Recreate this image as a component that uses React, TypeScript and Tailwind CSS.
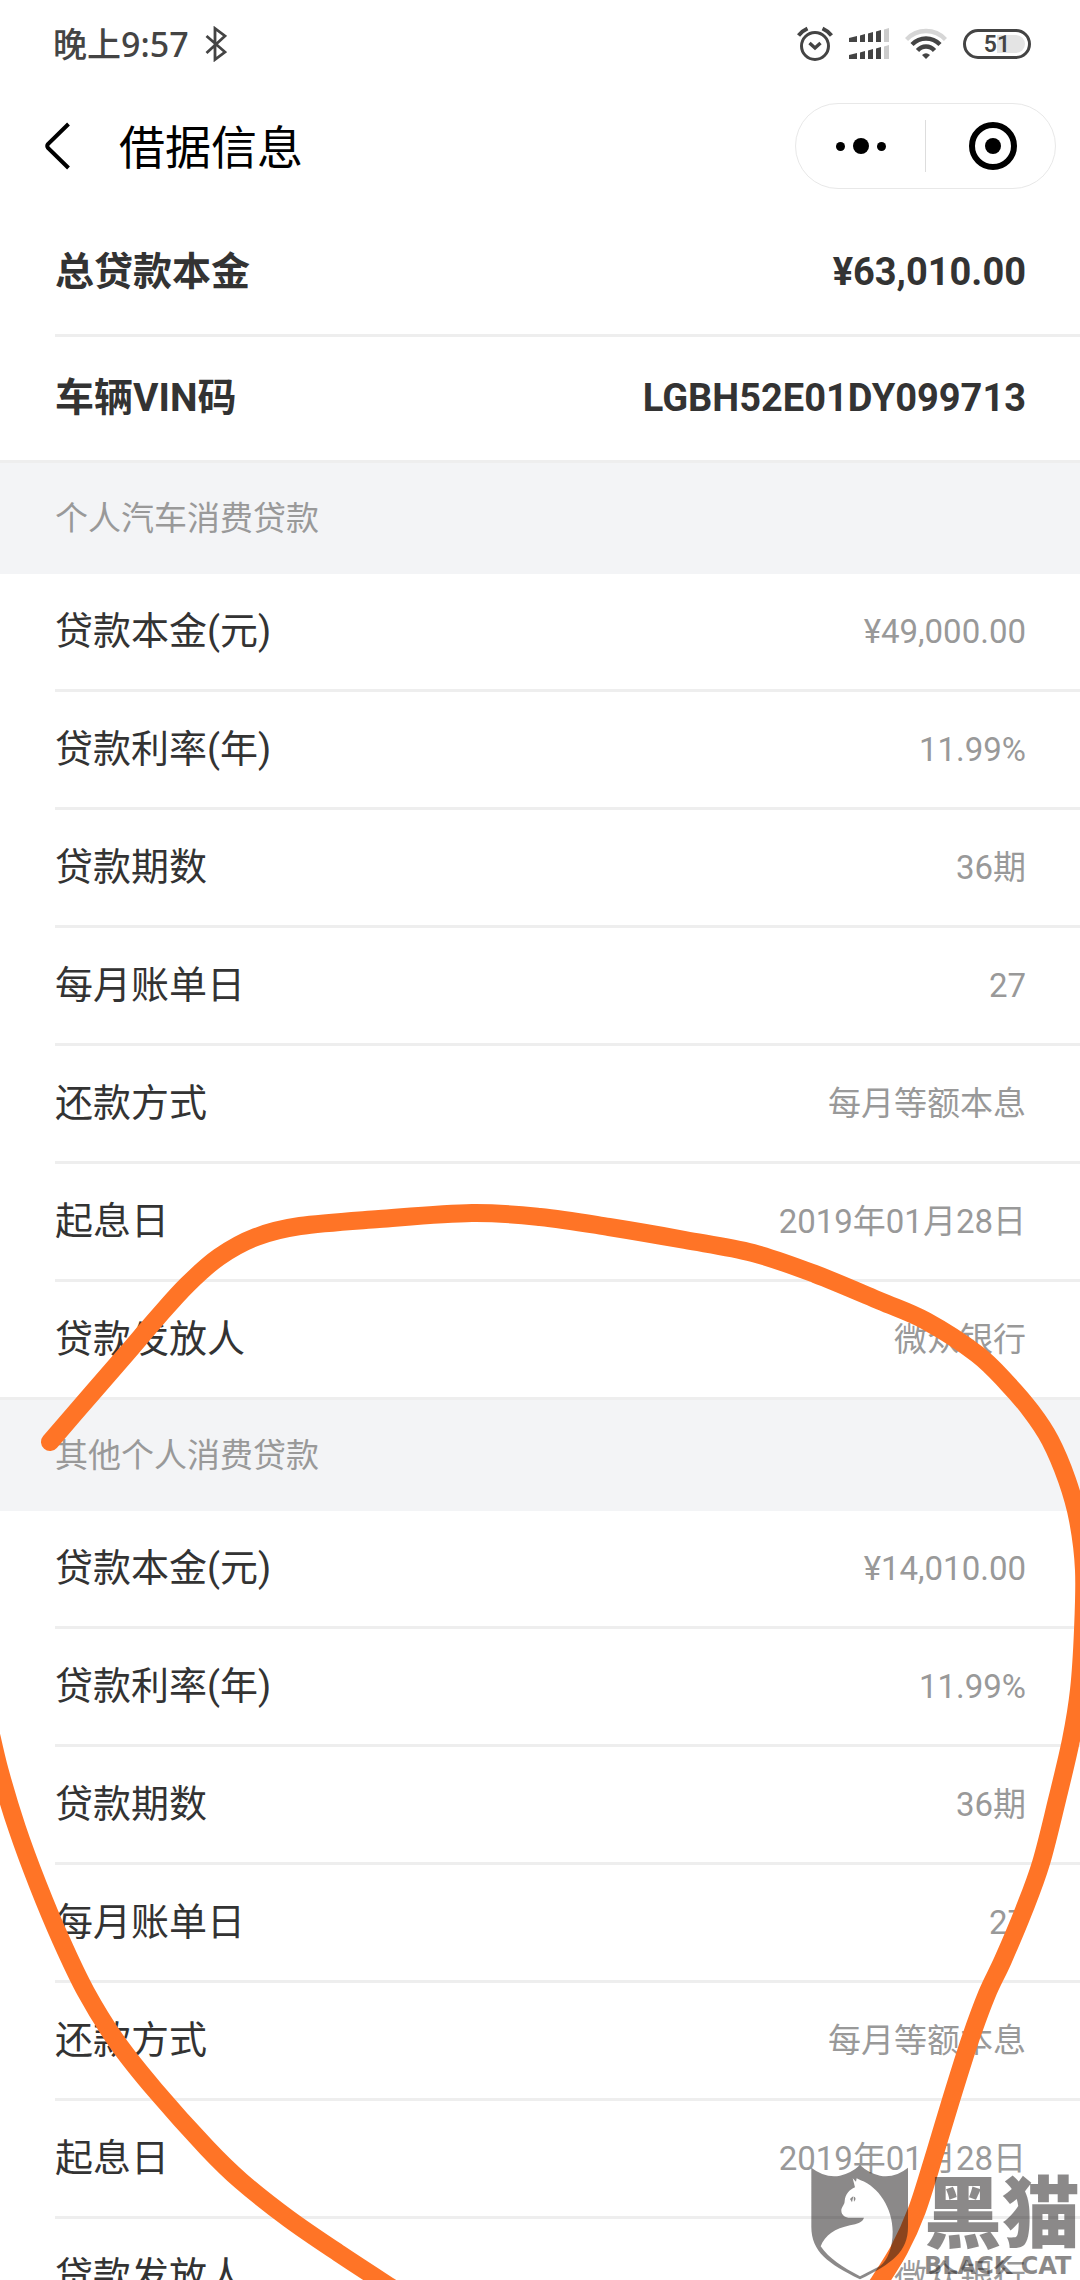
import React from "react";

interface LoanRow {
  label: string;
  value: string;
}

interface LoanSection {
  title: string;
  rows: LoanRow[];
}

type Point = [number, number];

const SUMMARY: LoanRow[] = [
  { label: "总贷款本金", value: "¥63,010.00" },
  { label: "车辆VIN码", value: "LGBH52E01DY099713" },
];

const SECTIONS: LoanSection[] = [
  {
    title: "个人汽车消费贷款",
    rows: [
      { label: "贷款本金(元)", value: "¥49,000.00" },
      { label: "贷款利率(年)", value: "11.99%" },
      { label: "贷款期数", value: "36期" },
      { label: "每月账单日", value: "27" },
      { label: "还款方式", value: "每月等额本息" },
      { label: "起息日", value: "2019年01月28日" },
      { label: "贷款发放人", value: "微众银行" },
    ],
  },
  {
    title: "其他个人消费贷款",
    rows: [
      { label: "贷款本金(元)", value: "¥14,010.00" },
      { label: "贷款利率(年)", value: "11.99%" },
      { label: "贷款期数", value: "36期" },
      { label: "每月账单日", value: "27" },
      { label: "还款方式", value: "每月等额本息" },
      { label: "起息日", value: "2019年01月28日" },
      { label: "贷款发放人", value: "微众银行" },
    ],
  },
];

const MARK_TOP: Point[] = [
  [50, 1442], [94, 1391], [127, 1353], [157, 1318], [187, 1285], [219, 1257], [256, 1237], [300, 1226],
  [379, 1219], [472, 1213], [540, 1217], [609, 1227], [685, 1240], [753, 1253], [815, 1274], [880, 1301],
  [926, 1321], [977, 1354], [1007, 1383], [1031, 1411], [1050, 1440], [1067, 1480], [1078, 1520], [1084, 1570],
  [1083, 1630], [1079, 1690], [1071, 1740], [1057, 1800], [1041, 1863], [1024, 1910], [1003, 1960], [987, 1994],
  [970, 2040], [951, 2100], [935, 2153], [917, 2210], [899, 2250], [874, 2290],
];

const MARK_LEFT: Point[] = [
  [-10, 1730], [0, 1772], [17, 1828], [38, 1885], [61, 1940], [86, 1992], [117, 2042], [155, 2090],
  [207, 2148], [241, 2181], [289, 2219], [340, 2254], [392, 2288],
];

// Catmull-Rom through the sampled pen points
function smoothPath(points: Point[]): string {
  let d = `M${points[0][0]} ${points[0][1]}`;
  for (let i = 0; i < points.length - 1; i++) {
    const p0 = points[i - 1] ?? points[i];
    const p1 = points[i];
    const p2 = points[i + 1];
    const p3 = points[i + 2] ?? p2;
    d += ` C${p1[0] + (p2[0] - p0[0]) / 6} ${p1[1] + (p2[1] - p0[1]) / 6}`;
    d += ` ${p2[0] - (p3[0] - p1[0]) / 6} ${p2[1] - (p3[1] - p1[1]) / 6} ${p2[0]} ${p2[1]}`;
  }
  return d;
}

function BluetoothIcon() {
  return (
    <svg width="22" height="36" viewBox="0 0 22 36" fill="none" stroke="#444" strokeWidth="2.8">
      <path d="M1.5 10 20 26 10 33.5V2.5L20 10 1.5 27" />
    </svg>
  );
}

function AlarmIcon() {
  return (
    <svg width="36" height="36" viewBox="0 0 36 36" fill="none" stroke="#444" strokeWidth="3">
      <circle cx="18" cy="20" r="13.5" />
      <path d="M12.5 17 18 22 23.5 17" strokeWidth="3.4" />
      <path d="M1.5 9.5Q5 5 10.5 2.5M34.5 9.5Q31 5 25.5 2.5" strokeWidth="4" />
    </svg>
  );
}

function SignalIcon() {
  return (
    <svg width="40" height="32" viewBox="0 0 40 32" fill="#444">
      <path d="M0 10 8 8V14H0ZM11 7.5 16 6V14H11ZM19 5.5 24 4V14H19ZM27 3.5 32 2V14H27Z" />
      <path d="M35 1.5 40 0V14H35Z" fill="#ccc" />
      <path d="M0 27 8 25V31H0ZM11 24.5 16 23V31H11ZM19 22.5 24 21V31H19ZM27 20.5 32 19V31H27Z" />
      <path d="M35 18.5 40 17V31H35Z" fill="#ccc" />
    </svg>
  );
}

function WifiIcon() {
  return (
    <svg width="42" height="32" viewBox="0 0 42 32" fill="none" stroke="#444" strokeWidth="4.4">
      <path d="M1.5 11.5Q9.5 3 21 3T40.5 11.5" stroke="#d6d6d6" />
      <path d="M7 16.5Q13 10.5 21 10.5T35 16.5" />
      <path d="M12.5 22.5Q16 18.5 21 18.5T29.5 22.5" />
      <path d="M17 27Q21 23.5 25 27L21 31Z" fill="#444" stroke="none" />
    </svg>
  );
}

function StatusBar() {
  return (
    <div className="flex h-[88px] items-center justify-between pl-[53px] pr-[49px] text-[#444]">
      <div className="flex items-center gap-4">
        <span className="font-['Noto_Sans','Noto_Sans_CJK_SC',sans-serif] text-[34px] font-medium leading-[40px]">
          晚上9:57
        </span>
        <BluetoothIcon />
      </div>
      <div className="flex items-center gap-4">
        <AlarmIcon />
        <SignalIcon />
        <WifiIcon />
        <div className="relative flex h-[30px] w-[68px] items-center justify-center rounded-full border-[3px] border-[#444]">
          <span className="absolute right-[3px] h-[18px] w-[28px] rounded-r-full bg-[#e4e4e4]" />
          <span className="relative pt-[2px] font-['Roboto',sans-serif] text-[23px] font-semibold leading-[24px]">51</span>
        </div>
      </div>
    </div>
  );
}

function NavBar() {
  return (
    <header className="flex h-[116px] items-center pl-[44px] pr-[24px] text-black">
      <button type="button" aria-label="返回" className="flex h-[60px] w-[28px] items-center">
        <svg width="28" height="48" viewBox="0 0 28 48" fill="none" stroke="currentColor" strokeWidth="4">
          <path d="M24.5 2 4 22Q2.5 24 4 26L24.5 46" />
        </svg>
      </button>
      <h1 className="ml-[47px] flex-1 pt-1 text-[46px] leading-[60px]">借据信息</h1>
      <div className="flex h-[86px] w-[261px] items-center rounded-full border border-[#e8e8e8]">
        <button type="button" aria-label="更多" className="flex h-full w-[129px] items-center justify-center gap-2">
          <span className="size-[9px] rounded-full bg-black" />
          <span className="size-4 rounded-full bg-black" />
          <span className="size-[9px] rounded-full bg-black" />
        </button>
        <span className="h-[52px] w-px bg-[#ddd]" />
        <button type="button" aria-label="关闭" className="flex h-full flex-1 items-center justify-center pl-1">
          <span className="flex size-12 items-center justify-center rounded-full border-[6px] border-black">
            <span className="size-4 rounded-full bg-black" />
          </span>
        </button>
      </div>
    </header>
  );
}

function SummaryList({ rows }: { rows: LoanRow[] }) {
  return (
    <dl className="ml-[55px] pt-[7px] font-bold leading-[48px] text-[#333]">
      {rows.map((row) => (
        <div
          key={row.label}
          className="flex h-[126px] items-center justify-between border-b-[3px] border-[#eee] pb-[2px] pr-[54px] last:h-[123px] last:border-b-0"
        >
          <dt className="text-[39px] leading-[48px]">{row.label}</dt>
          <dd className="text-[38px] leading-[48px]">{row.value}</dd>
        </div>
      ))}
    </dl>
  );
}

function Section({ section }: { section: LoanSection }) {
  return (
    <section>
      <h2 className="flex h-[114px] items-center border-t-[3px] border-[#eee] bg-[#f3f4f6] pl-[55px] text-[33px] leading-[40px] text-[#999]">
        {section.title}
      </h2>
      <dl className="ml-[55px]">
        {section.rows.map((row) => (
          <div
            key={row.label}
            className="flex h-[118px] items-center justify-between border-b-[3px] border-[#eee] pr-[54px] last:h-[115px] last:border-b-0"
          >
            <dt className="pb-[2px] text-[38px] leading-[48px] text-[#333]">{row.label}</dt>
            <dd className="text-[33px] leading-[48px] text-[#999]">{row.value}</dd>
          </div>
        ))}
      </dl>
    </section>
  );
}

function PenMark() {
  return (
    <svg
      className="pointer-events-none absolute left-0 top-0"
      width="1080"
      height="2280"
      viewBox="0 0 1080 2280"
      fill="none"
      stroke="#ff7426"
      strokeWidth="18"
      strokeLinecap="round"
      strokeLinejoin="round"
    >
      <path d={smoothPath(MARK_TOP)} />
      <path d={smoothPath(MARK_LEFT)} />
    </svg>
  );
}

function Watermark() {
  return (
    <div className="pointer-events-none absolute bottom-0 right-0 flex h-[125px] text-[#191515] opacity-50">
      <svg width="120" height="125" viewBox="0 0 360 375" fill="currentColor">
        <path
          fillRule="evenodd"
          d="M34 38Q75 70 120 62Q155 54 180 30Q205 54 240 62Q285 70 324 38V215C324 290 276 325 180 373C84 325 34 290 34 215Z
             M158 70 165 97C148 104 136 118 134 138C134 150 124 156 124 167C124 180 136 188 150 188H192C188 202 172 206 150 211C105 221 75 240 62 274C88 312 128 336 180 364L240 333C262 316 278 280 278 230C278 160 235 95 182 76L170 70 168 80Z"
        />
        <path d="M150 132Q156 126 160 124L156 142ZM161 125Q168 126 166 134L162 140Z" />
      </svg>
      <div className="flex flex-col pl-1 pt-[13px]">
        <span className="font-['Noto_Sans_CJK_SC',sans-serif] text-[78px] font-black leading-[80px]">黑猫</span>
        <span className="mt-[6px] font-['DejaVu_Sans',sans-serif] text-[24px] font-bold leading-[24px]">BLACK CAT</span>
      </div>
    </div>
  );
}

export default function App() {
  return (
    <main className="relative h-screen overflow-hidden bg-white font-['Roboto','Noto_Sans_CJK_SC',sans-serif]">
      <StatusBar />
      <NavBar />
      <SummaryList rows={SUMMARY} />
      {SECTIONS.map((section) => (
        <Section key={section.title} section={section} />
      ))}
      <PenMark />
      <Watermark />
    </main>
  );
}
